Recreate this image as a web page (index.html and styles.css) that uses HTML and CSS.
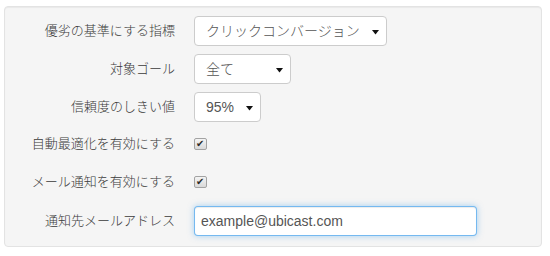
FILE: index.html
```html
<!DOCTYPE html>
<html lang="ja">
<head>
<meta charset="utf-8">
<title>設定</title>
<link rel="stylesheet" href="styles.css">
</head>
<body>
<div class="well">
  <form class="form">
    <label class="label" for="metric">優劣の基準にする指標</label>
    <span class="select-wrap w-metric">
      <select id="metric" class="select"><option>クリックコンバージョン</option></select>
      <svg class="arrow" width="7" height="5" viewBox="0 0 7 5"><polygon points="0,0 7,0 3.5,4.5" fill="#111"/></svg>
    </span>

    <label class="label" for="goal">対象ゴール</label>
    <span class="select-wrap w-goal">
      <select id="goal" class="select"><option>全て</option></select>
      <svg class="arrow" width="7" height="5" viewBox="0 0 7 5"><polygon points="0,0 7,0 3.5,4.5" fill="#111"/></svg>
    </span>

    <label class="label" for="conf">信頼度のしきい値</label>
    <span class="select-wrap w-conf">
      <select id="conf" class="select"><option>95%</option></select>
      <svg class="arrow" width="7" height="5" viewBox="0 0 7 5"><polygon points="0,0 7,0 3.5,4.5" fill="#111"/></svg>
    </span>

    <label class="label label-check" for="auto">自動最適化を有効にする</label>
    <span class="check-cell"><input id="auto" type="checkbox" class="check" checked></span>

    <label class="label label-check" for="mail">メール通知を有効にする</label>
    <span class="check-cell"><input id="mail" type="checkbox" class="check" checked></span>

    <label class="label" for="addr">通知先メールアドレス</label>
    <span class="input-cell"><input id="addr" type="text" class="text-input" value="example@ubicast.com"></span>
  </form>
</div>
</body>
</html>
```
FILE: styles.css
```css
html, body {
  margin: 0;
  padding: 0;
  background: #fff;
}

body {
  font-family: "Liberation Sans", "Noto Sans CJK JP", sans-serif;
  color: #333;
}

.well {
  margin: 6px 8px 0 4px;
  padding: 9px 0 10px 0;
  background: #f5f5f5;
  border: 1px solid #e3e3e3;
  border-radius: 4px;
  box-shadow: inset 0 1px 1px rgba(0, 0, 0, 0.05);
}

.form {
  display: grid;
  grid-template-columns: 170px 1fr;
  grid-auto-rows: 30px;
  column-gap: 19px;
  row-gap: 8px;
  margin: 0;
}

.label {
  align-self: center;
  text-align: right;
  font-size: 13px;
  line-height: 18px;
  font-weight: 300;
  color: #3a3a3a;
  font-family: "Liberation Sans", "Noto Sans CJK JP", sans-serif;
}

.label-check {
  padding-bottom: 3px;
}

.select-wrap {
  position: relative;
  display: block;
  height: 30px;
}

.w-metric { width: 193px; }
.w-goal { width: 97px; }
.w-conf { width: 67px; }

.select {
  -webkit-appearance: none;
  appearance: none;
  display: block;
  box-sizing: border-box;
  width: 100%;
  height: 30px;
  margin: 0;
  padding: 0 20px 0 11px;
  font-family: "Liberation Sans", "Noto Sans CJK JP", sans-serif;
  font-size: 14px;
  font-weight: 300;
  color: #555;
  background: #fff;
  border: 1px solid #ccc;
  border-radius: 4px;
  outline: none;
}

.arrow {
  position: absolute;
  right: 8px;
  top: 14px;
  pointer-events: none;
}

.check-cell {
  display: block;
}

.check {
  -webkit-appearance: none;
  appearance: none;
  position: relative;
  display: block;
  box-sizing: border-box;
  width: 13px;
  height: 12px;
  margin: 8px 0 0 0;
  border: 1px solid #a3a3a3;
  border-radius: 2px;
  background: linear-gradient(#f4f4f4, #d9d9d9);
}

.check:checked::after {
  content: "✔";
  position: absolute;
  left: 1px;
  top: -2px;
  font-family: "DejaVu Sans", sans-serif;
  font-size: 10px;
  line-height: 14px;
  color: #2a2a2a;
}

.input-cell {
  display: block;
}

.text-input {
  display: block;
  box-sizing: border-box;
  width: 283px;
  height: 30px;
  margin: 0;
  padding: 4px 6px;
  font-family: "Liberation Sans", sans-serif;
  font-size: 14px;
  color: #555;
  background: #fff;
  border: 1px solid rgba(82, 168, 236, 0.8);
  border-radius: 4px;
  outline: none;
  box-shadow: inset 0 1px 1px rgba(0, 0, 0, 0.075), 0 0 6px rgba(82, 168, 236, 0.5);
}
```
